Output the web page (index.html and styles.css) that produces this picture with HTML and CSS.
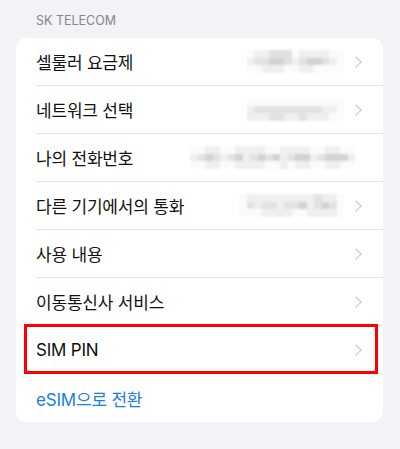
FILE: index.html
```html
<!DOCTYPE html>
<html lang="ko">
<head>
    <meta charset="UTF-8">
    <meta name="viewport" content="width=device-width, initial-scale=1.0">
    <title>SK TELECOM</title>
    <link rel="stylesheet" href="styles.css">
</head>
<body>
    <div class="section-title">SK TELECOM</div>

    <div class="card">
        <div class="row">
            <span class="label">셀룰러 요금제</span>
            <span class="mosaic" data-p="0112220111100|1223321233210|0011100110000"></span>
            <span class="chev"></span>
        </div>
        <div class="row">
            <span class="label">네트워크 선택</span>
            <span class="mosaic" data-p="0000000000000|1222222222110|1112211211100"></span>
            <span class="chev"></span>
        </div>
        <div class="row">
            <span class="label">나의 전화번호</span>
            <span class="mosaic wide" data-p="0011001111001111001100|1232123123231233123331|0011001111001011001100"></span>
        </div>
        <div class="row">
            <span class="label">다른 기기에서의 통화</span>
            <span class="mosaic" data-p="01111111112110|02122122312320|00011110011110"></span>
            <span class="chev"></span>
        </div>
        <div class="row">
            <span class="label">사용 내용</span>
            <span class="chev"></span>
        </div>
        <div class="row">
            <span class="label">이동통신사 서비스</span>
            <span class="chev"></span>
        </div>
        <div class="row highlighted">
            <span class="label">SIM PIN</span>
            <span class="chev"></span>
            <span class="mark"></span>
        </div>
        <div class="row">
            <span class="label link">eSIM으로 전환</span>
        </div>
    </div>

    <script>
        // build the pixelated placeholders from their pattern strings
        document.querySelectorAll('.mosaic').forEach(el => {
            el.dataset.p.split('|').forEach(line => {
                const r = document.createElement('span');
                r.className = 'mrow';
                for (const c of line) {
                    const cell = document.createElement('span');
                    cell.className = 'cell s' + c;
                    r.appendChild(cell);
                }
                el.appendChild(r);
            });
        });
    </script>
</body>
</html>
```

FILE: styles.css
```css
body {
    margin: 0;
    padding: 0 16px;
    background-color: #f2f2f7;
    font-family: 'Inter', 'Noto Sans CJK KR', sans-serif;
    color: #000;
}
.section-title {
    padding: 13px 0 0 20px;
    height: 27px;
    box-sizing: border-box;
    font-family: 'Inter', 'Noto Sans', sans-serif;
    font-size: 12.5px;
    color: #86868b;
    line-height: 16px;
}
.card {
    background-color: #fff;
    border-radius: 10px;
    margin-top: 11px;
    width: 367px;
}
.row {
    position: relative;
    display: flex;
    align-items: center;
    height: 48px;
    margin-left: 20px;
    padding-right: 20px;
    border-bottom: 1px solid #e3e3e6;
    box-sizing: border-box;
}
.row:last-child {
    border-bottom: none;
}
.label {
    flex: 1;
    font-size: 17px;
    letter-spacing: -0.2px;
    color: #111;
}
.link {
    color: #1b7ee2;
}
.mosaic {
    display: flex;
    flex-direction: column;
    margin-right: 8px;
    filter: blur(1px);
}
.mrow {
    display: flex;
}
.cell {
    width: 7.5px;
    height: 7.5px;
}
.s0 { background-color: #fbfbfb; }
.s1 { background-color: #efeff0; }
.s2 { background-color: #e2e2e3; }
.s3 { background-color: #d3d3d5; }
.chev {
    width: 7px;
    height: 7px;
    border-top: 1.6px solid #c4c4c7;
    border-right: 1.6px solid #c4c4c7;
    transform: rotate(45deg);
    margin-right: 3px;
}
.mark {
    position: absolute;
    left: -12px;
    right: 5px;
    top: -2px;
    bottom: -1px;
    border: 3px solid #f00;
}
```
